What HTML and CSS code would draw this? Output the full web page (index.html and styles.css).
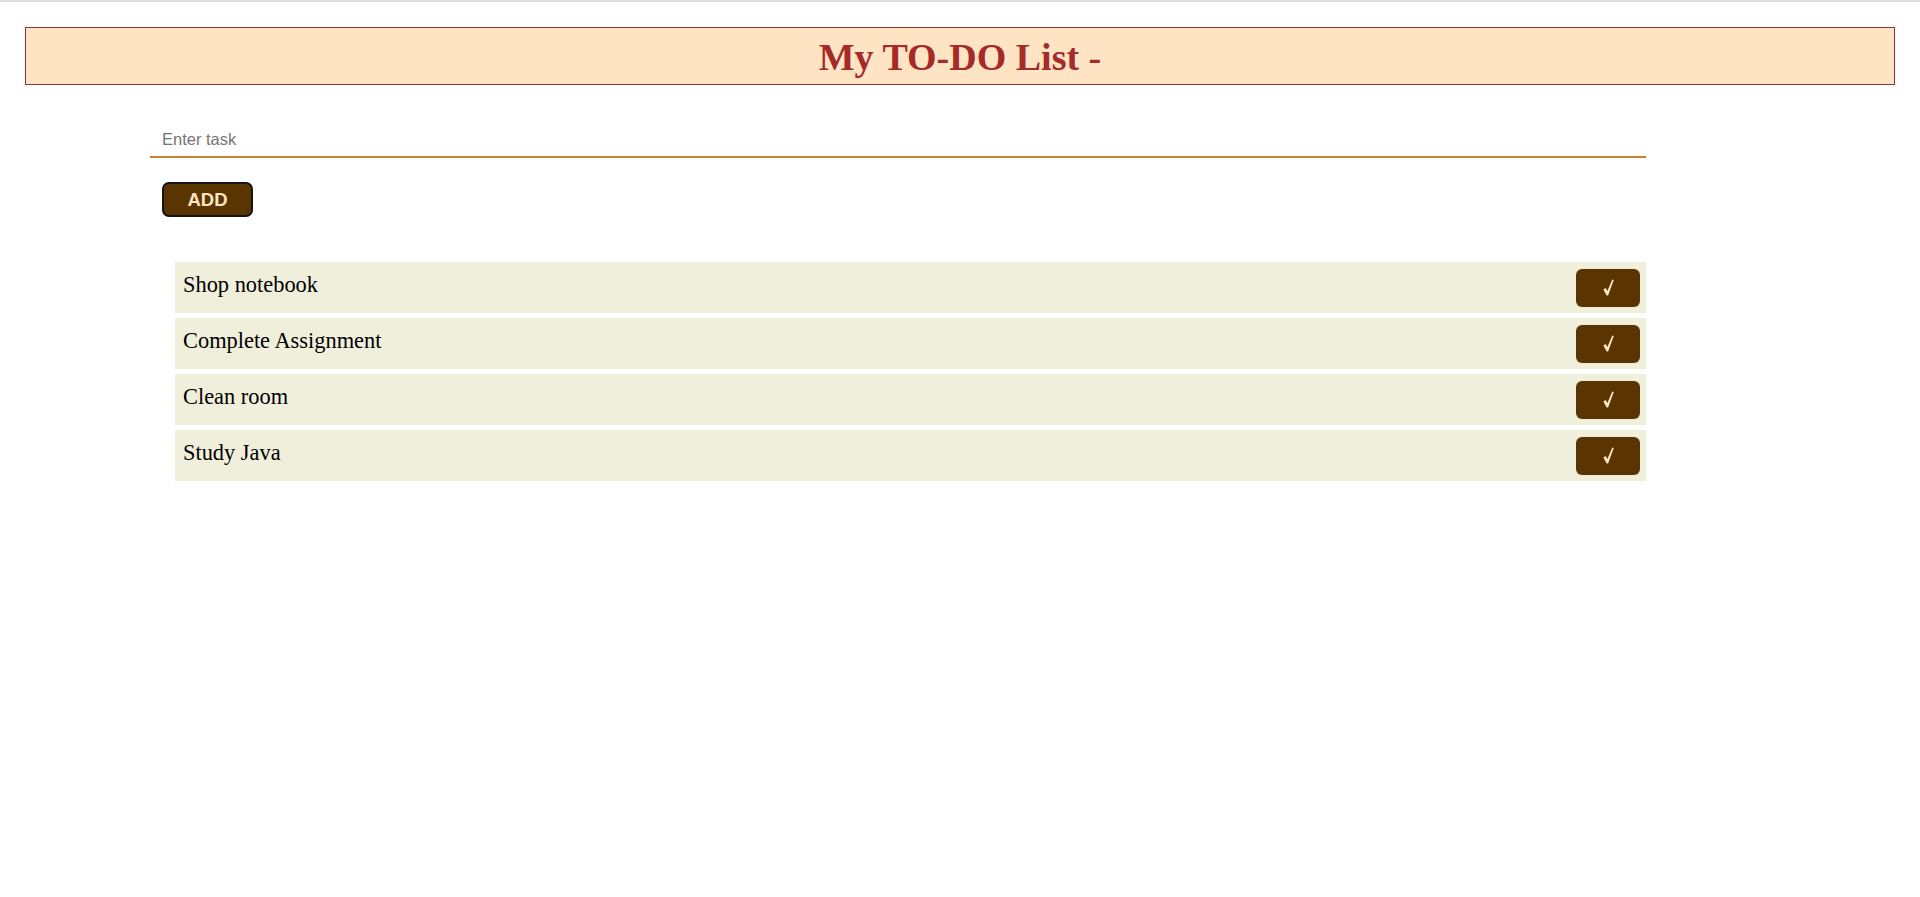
FILE: index.html
```html
<!DOCTYPE html>
<html lang="en">
<head>
<meta charset="utf-8">
<title>My TO-DO List</title>
<link rel="stylesheet" href="styles.css">
</head>
<body>
<div class="topline"></div>
<header class="banner">
  <h1 class="title">My TO-DO List -</h1>
</header>
<main class="main">
  <input class="task-input" type="text" placeholder="Enter task">
  <button class="add-btn" type="button">ADD</button>
  <ul class="tasks">
    <li class="task"><span class="task-text">Shop notebook</span><button class="done-btn" type="button" aria-label="done"><svg class="check" width="11" height="17" viewBox="0 0 11 17"><polygon points="0.3,10.5 2.7,9.1 4.4,12.1 9.3,0.4 10.8,1.1 5.1,16.4 3.7,16.4" /></svg></button></li>
    <li class="task"><span class="task-text">Complete Assignment</span><button class="done-btn" type="button" aria-label="done"><svg class="check" width="11" height="17" viewBox="0 0 11 17"><polygon points="0.3,10.5 2.7,9.1 4.4,12.1 9.3,0.4 10.8,1.1 5.1,16.4 3.7,16.4" /></svg></button></li>
    <li class="task"><span class="task-text">Clean room</span><button class="done-btn" type="button" aria-label="done"><svg class="check" width="11" height="17" viewBox="0 0 11 17"><polygon points="0.3,10.5 2.7,9.1 4.4,12.1 9.3,0.4 10.8,1.1 5.1,16.4 3.7,16.4" /></svg></button></li>
    <li class="task"><span class="task-text">Study Java</span><button class="done-btn" type="button" aria-label="done"><svg class="check" width="11" height="17" viewBox="0 0 11 17"><polygon points="0.3,10.5 2.7,9.1 4.4,12.1 9.3,0.4 10.8,1.1 5.1,16.4 3.7,16.4" /></svg></button></li>
  </ul>
</main>
</body>
</html>
```

FILE: styles.css
```css
html, body {
  margin: 0;
  padding: 0;
  background: #ffffff;
}

body {
  font-family: "Liberation Serif", "Times New Roman", serif;
  color: #000000;
}

.topline {
  height: 2px;
  background: #dedede;
}

.banner {
  margin: 25px 25px 0 25px;
  border: 1px solid #a52a2a;
  background: #ffe4c4;
  text-align: center;
}

.title {
  margin: 0;
  padding: 7px 0 5px 0;
  font-family: "Liberation Serif", "Times New Roman", serif;
  font-size: 38px;
  line-height: 44px;
  font-weight: bold;
  color: #a52a2a;
}

.main {
  margin: 31px 0 0 150px;
  width: 1496px;
  display: flex;
  flex-direction: column;
  align-items: flex-start;
}

.task-input {
  box-sizing: border-box;
  width: 100%;
  height: 42px;
  margin: 0;
  padding: 14px 12px 8px 12px;
  border: none;
  border-bottom: 2px solid #cd7f32;
  outline: none;
  background: transparent;
  font-family: "Liberation Sans", Arial, sans-serif;
  font-size: 16.5px;
  line-height: 18px;
  color: #333;
}

.task-input::placeholder {
  color: #757575;
}

.add-btn {
  box-sizing: border-box;
  margin: 24px 0 0 12px;
  width: 91px;
  height: 35px;
  padding: 0;
  border: 2px solid #141414;
  border-radius: 7px;
  background: #5a3502;
  color: #ffe4c4;
  font-family: "Liberation Sans", Arial, sans-serif;
  font-size: 18.5px;
  font-weight: bold;
  line-height: 31px;
  text-align: center;
}

.tasks {
  list-style: none;
  margin: 45px 0 0 0;
  padding: 0 0 0 25px;
  width: 100%;
  box-sizing: border-box;
  display: flex;
  flex-direction: column;
  gap: 5px;
}

.task {
  box-sizing: border-box;
  height: 51px;
  padding: 0 6px 0 8px;
  background: #f0efdc;
  display: flex;
  justify-content: space-between;
  align-items: center;
}

.task-text {
  align-self: flex-start;
  padding-top: 10px;
  font-size: 22.4px;
  line-height: 25px;
}

.done-btn {
  width: 64px;
  height: 38px;
  padding: 0;
  border: none;
  border-radius: 6px;
  background: #5a3502;
  display: flex;
  align-items: center;
  justify-content: center;
}

.check {
  display: block;
  fill: #ffe4c4;
}
```
